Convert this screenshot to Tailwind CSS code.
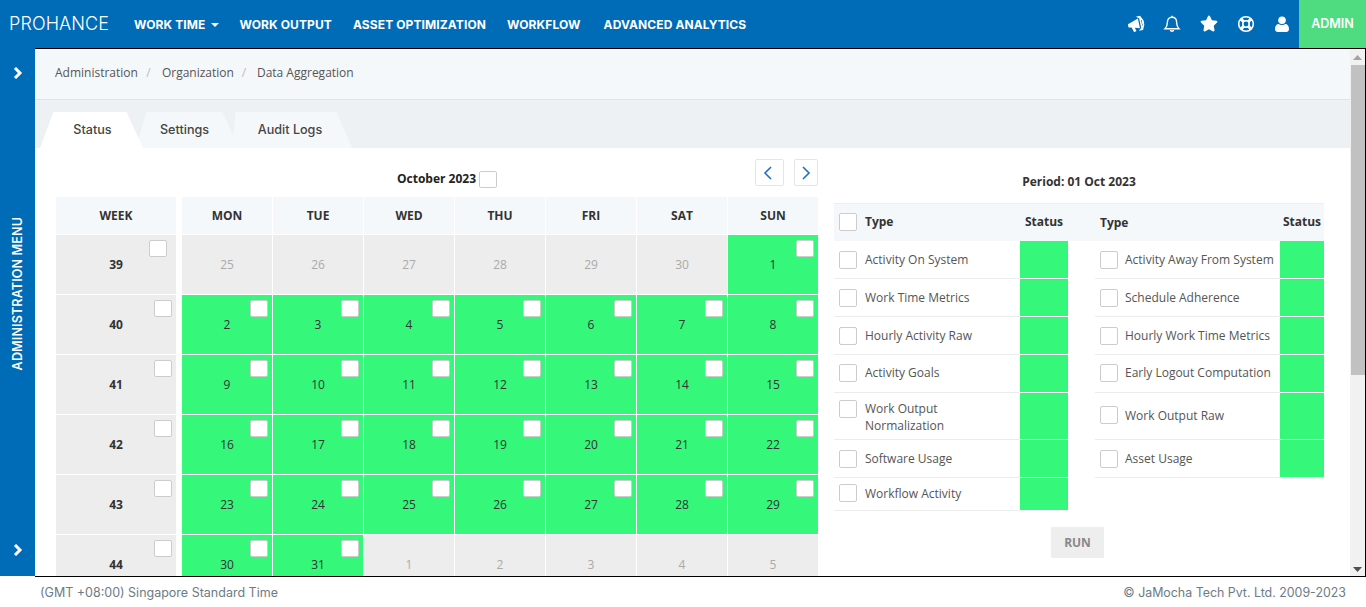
<!doctype html>
<html>
<head>
<meta charset="UTF-8">
<title>Data Aggregation</title>
<script src="https://cdn.jsdelivr.net/npm/@tailwindcss/browser@4"></script>
</head>
<body class="h-[607px] w-[1366px] overflow-hidden bg-white text-[#333] font-['Open_Sans',sans-serif] text-xs">

<!-- top nav -->
<header class="h-12 bg-[#006bb6] flex items-center text-white font-['Inter',sans-serif]">
  <div class="w-[134px] pl-[9px] text-[18px] font-light tracking-[0.1px]">PROHANCE</div>
  <nav class="flex items-center gap-[21px] pt-[1px] text-[12px] font-bold tracking-[0.1px]">
    <a class="flex items-center gap-[5px]">WORK TIME<svg width="8" height="4" viewBox="0 0 8 4"><path d="M0 0h8L4 4z" fill="#fff"/></svg></a>
    <a>WORK OUTPUT</a>
    <a>ASSET OPTIMIZATION</a>
    <a>WORKFLOW</a>
    <a class="ml-[2px]">ADVANCED ANALYTICS</a>
  </nav>
  <div class="ml-auto flex items-center gap-[19px] pr-[10px] -mt-[1px]">
    <svg class="w-[18px] h-[18px] -rotate-12" viewBox="0 0 18 18" fill="#fff"><path d="M1 7.500 3 7 12 4v10L7 12.400l1 3.600-2.500.6L4 11.600 3 11.300 1 10.800z"/><path d="M12.500 2.500h1.700l2 4.200v4.600l-2 4.200h-1.700l1.500-1.200V3.700z" fill="none" stroke="#fff" stroke-width="1.500"/><path d="M15.500 7h1.500v4h-1.500z"/></svg>
    <svg class="w-[18px] h-[18px] -ml-[1px]" viewBox="0 0 18 18" fill="none" stroke="#fff" stroke-width="1.400"><path d="M9 2.200c-3 0-4.600 2.200-4.600 5 0 3.400-.9 5-2.400 6.500h14c-1.500-1.500-2.400-3.100-2.400-6.500 0-2.800-1.600-5-4.600-5z"/><path d="M9 .8v1.400M7.300 15a1.800 1.800 0 0 0 3.400 0"/></svg>
    <svg class="w-[18px] h-[17px]" viewBox="0 0 576 512" fill="#fff"><path d="M259.300 17.800 194 150.200 47.900 171.500c-26.200 3.800-36.700 36.100-17.700 54.600l105.700 103-25 145.500c-4.500 26.300 23.200 46 46.400 33.700L288 439.600l130.700 68.700c23.200 12.200 50.900-7.400 46.400-33.700l-25-145.500 105.700-103c19-18.500 8.500-50.800-17.700-54.600L382 150.200 316.700 17.800c-11.700-23.600-45.600-23.900-57.400 0z"/></svg>
    <svg class="w-[18px] h-[18px]" viewBox="0 0 18 18" fill="none" stroke="#fff"><circle cx="9" cy="9" r="7.300" stroke-width="1.600"/><circle cx="9" cy="9" r="3.200" stroke-width="1.600"/><path d="M3.900 3.900 6.700 6.700M14.100 3.900 11.300 6.700M3.900 14.100 6.700 11.300M14.100 14.100 11.300 11.300" stroke-width="3"/></svg>
    <svg class="w-[14px] h-[16px] ml-[1px]" viewBox="0 0 14 16" fill="#fff"><circle cx="7" cy="4.200" r="3.800"/><path d="M0 13c0-3.500 2-5 3.500-5 1 .7 2.200 1 3.500 1s2.500-.3 3.500-1C12 8 14 9.500 14 13c0 2-1.200 3-2.800 3H2.800C1.200 16 0 15 0 13z"/></svg>
  </div>
  <div class="w-[67px] h-12 bg-[#4fdc80] flex items-center justify-center pt-[1px] text-[12.500px] font-semibold">ADMIN</div>
</header>

<div class="flex h-[529px]">
  <!-- admin side menu -->
  <aside class="w-[35px] h-[528px] bg-[#006bb6] flex flex-col items-center justify-between pt-[19px] pb-[20px] text-white">
    <svg class="w-[10px] h-[12px]" viewBox="0 0 10 12" fill="none" stroke="#fff" stroke-width="3"><path d="M2 1l5 5-5 5"/></svg>
    <div class="[writing-mode:vertical-rl] rotate-180 ml-[1px] font-['Inter',sans-serif] font-semibold text-[12.600px] tracking-[0.1px] mb-[36px]">ADMINISTRATION MENU</div>
    <svg class="w-[10px] h-[12px]" viewBox="0 0 10 12" fill="none" stroke="#fff" stroke-width="3"><path d="M2 1l5 5-5 5"/></svg>
  </aside>

  <div class="flex-1 flex border border-l-0 border-black overflow-hidden">
    <main class="w-[1315px] overflow-hidden">
      <!-- breadcrumb -->
      <div class="h-[51px] bg-[#f5f8fa] border-b border-[#dfe3e5] flex items-center pl-5 pb-[2px] text-[#555] text-[12px]">
        <span>Administration</span><span class="text-[#bbb] w-[24px] text-center pr-[3px]">/</span>
        <span>Organization</span><span class="text-[#bbb] w-[23px] text-center pr-[3px]">/</span>
        <span>Data Aggregation</span>
      </div>
      <!-- tabs -->
      <div class="h-[48px] bg-[#edf1f4] flex items-end pl-[5px] font-['Inter',sans-serif] text-[12.600px] font-medium text-[#444]">
        <div class="relative z-20 w-[103px] h-[36px] bg-white flex items-center justify-center pl-[2px] [clip-path:polygon(13%_0,84%_0,100%_100%,0_100%)]">Status</div>
        <div class="relative z-10 -ml-[7px] w-[103px] h-[36px] bg-[#f5f8fa] flex items-center justify-center pr-[6px] [clip-path:polygon(10%_0,84%_0,100%_100%,0_100%)]">Settings</div>
        <div class="-ml-[7px] w-[120px] h-[36px] bg-[#f5f8fa] flex items-center justify-center pr-[4px] [clip-path:polygon(3%_0,87%_0,100%_100%,0_100%)]">Audit Logs</div>
      </div>

      <div class="flex pl-[21px]">
        <!-- calendar -->
        <section class="w-[763px] shrink-0">
          <div class="h-[49px] flex items-start">
            <div class="ml-[341px] mt-[23px] flex items-center gap-[3px] font-bold text-[#222]"><span class="pb-[1px]">October 2023</span>
              <span class="w-[18px] h-[17px] bg-white border border-[#ccc] rounded-[2px]"></span></div>
            <button class="ml-auto mt-[11px] w-[29px] h-[27px] pr-[3px] border border-[#e5e5e5] rounded-[2px] flex items-center justify-center"><svg width="10" height="14" viewBox="0 0 10 14" fill="none" stroke="#1e6fc4" stroke-width="1.600"><path d="M8 1 2 7l6 6"/></svg></button>
            <button class="ml-[10px] mr-[1px] mt-[11px] w-[24px] h-[27px] border border-[#e5e5e5] rounded-[2px] flex items-center justify-center"><svg width="10" height="14" viewBox="0 0 10 14" fill="none" stroke="#1e6fc4" stroke-width="1.600"><path d="m2 1 6 6-6 6"/></svg></button>
          </div>
          <div id="calendar"></div>
        </section>

        <!-- period status -->
        <section class="ml-[15px] w-[490px] shrink-0">
          <div class="h-[55px] flex items-center justify-center pt-[12px] font-bold text-[#333]">Period: 01 Oct 2023</div>
          <div class="h-[38px] bg-[#f5f8fa] border-t border-[#eee] flex items-center font-bold">
            <div class="w-[186px] flex items-center pl-[5px] pb-[2px]"><span class="w-[18px] h-[18px] bg-white border border-[#ccc] rounded-[2px] mr-[8px]"></span>Type</div>
            <div class="w-[48px] text-center -mt-[1px]">Status</div>
            <div class="w-[27px]"></div>
            <div class="w-[185px] pl-[5px]">Type</div>
            <div class="w-[44px] text-center -mt-[1px]">Status</div>
          </div>
          <div class="flex">
            <div id="typesLeft" class="w-[234px]"></div>
            <div id="typesRight" class="ml-[27px] w-[229px]"></div>
          </div>
          <div class="flex justify-center pt-[16px]">
            <button class="w-[53px] h-[31px] -ml-[3px] bg-[#eee] rounded-[1px] font-bold text-[#888]">RUN</button>
          </div>
        </section>
      </div>
    </main>

    <!-- scrollbar -->
    <div class="w-[15px] bg-[#f1f1f1] flex flex-col items-center pt-[6px] pb-[4px]">
      <svg width="9" height="5" viewBox="0 0 9 5"><path d="M4.500 0 9 5H0z" fill="#a3a3a3"/></svg>
      <div class="w-[14px] h-[310px] bg-[#c1c1c1] mt-[5px]"></div>
      <svg class="mt-auto" width="9" height="5" viewBox="0 0 9 5"><path d="M4.500 5 9 0H0z" fill="#505050"/></svg>
    </div>
  </div>
</div>

<footer class="h-[30px] flex items-center justify-between pl-[40px] pr-[20px] pt-[3px] font-['Inter',sans-serif] text-[12.500px] text-[#6d7b85]">
  <span>(GMT +08:00) Singapore Standard Time</span>
  <span class="text-[12.400px]">© JaMocha Tech Pvt. Ltd. 2009-2023</span>
</footer>

<script>
var box = '<span class="absolute top-[5px] right-[4px] w-[18px] h-[17px] bg-white border border-[#ccc] rounded-[2px]"></span>';
var week39box = '<span class="absolute top-[5px] right-[9px] w-[18px] h-[17px] bg-white border border-[#ccc] rounded-[2px]"></span>';
var html = '<div class="flex mb-[1px]"><div class="w-[120px] h-[37px] mr-[6px] bg-[#f5f8fa] font-bold flex items-center justify-center">WEEK</div>';
['MON','TUE','WED','THU','FRI','SAT','SUN'].forEach(function (d) {
  html += '<div class="w-[90px] h-[37px] mr-[1px] bg-[#f5f8fa] font-bold flex items-center justify-center">' + d + '</div>';
});
html += '</div>';
var weeks = [
  [39, [25,26,27,28,29,30,1], 6, 7],
  [40, [2,3,4,5,6,7,8], 0, 7],
  [41, [9,10,11,12,13,14,15], 0, 7],
  [42, [16,17,18,19,20,21,22], 0, 7],
  [43, [23,24,25,26,27,28,29], 0, 7],
  [44, [30,31,1,2,3,4,5], 0, 2]
];
weeks.forEach(function (w, i) {
  html += '<div class="flex mb-[1px]"><div class="relative w-[120px] h-[59px] mr-[6px] bg-[#ededed] font-bold flex items-center justify-center">' + w[0] + (i === 0 ? week39box : box) + '</div>';
  w[1].forEach(function (n, j) {
    if (j >= w[2] && j < w[3]) {
      html += '<div class="relative w-[90px] h-[59px] mr-[1px] bg-[#35f87b] flex items-center justify-center">' + n + box + '</div>';
    } else {
      html += '<div class="w-[90px] h-[59px] mr-[1px] bg-[#ededed] text-[#aaa] flex items-center justify-center">' + n + '</div>';
    }
  });
  html += '</div>';
});
document.getElementById('calendar').innerHTML = html;

// r = [label, row height, two lines, nudge up]
function rows(list, statusClass, gapClass) {
  return list.map(function (r) {
    var h = r[1] === 47 ? 'h-[47px]' : r[1] === 33 ? 'h-[33px]' : 'h-[38px]';
    var align = r[2] ? 'items-start pt-[7px]' : r[3] ? 'items-center pb-[2px]' : 'items-center';
    return '<div class="flex ' + h + '"><div class="flex-1 flex ' + align + ' pl-[5px] border-b border-[#ececec] text-[#555]">' +
      '<span class="shrink-0 w-[18px] h-[18px] bg-white border border-[#ccc] rounded-[2px] ' + gapClass + '"></span><span class="leading-[17px]">' + r[0] + '</span></div>' +
      '<div class="' + statusClass + ' bg-[#35f87b] border-b border-white"></div></div>';
  }).join('');
}
document.getElementById('typesLeft').innerHTML = rows([
  ['Activity On System',38],['Work Time Metrics',38],['Hourly Activity Raw',38],['Activity Goals',38,false,true],
  ['Work Output<br>Normalization',47,true],['Software Usage',38],['Workflow Activity',33,false,true]
], 'w-[48px]', 'mr-[8px]');
document.getElementById('typesRight').innerHTML = rows([
  ['Activity Away From System',38],['Schedule Adherence',38],['Hourly Work Time Metrics',38],['Early Logout Computation',38,false,true],
  ['Work Output Raw',47,false,true],['Asset Usage',38]
], 'w-[44px]', 'mr-[7px]');
</script>
</body>
</html>
